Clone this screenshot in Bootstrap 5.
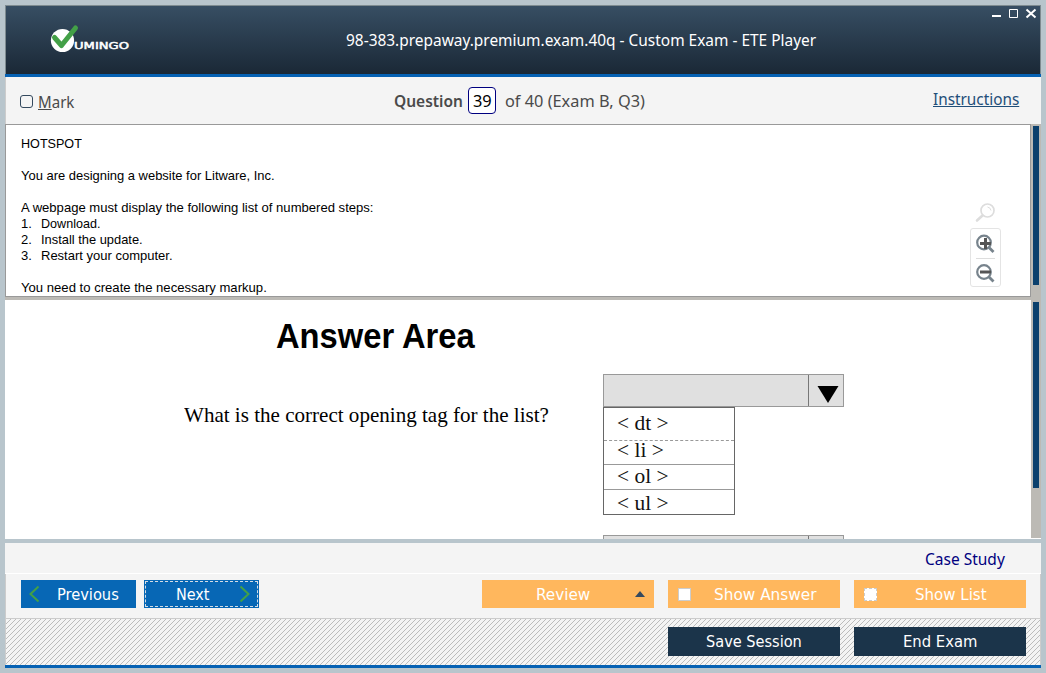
<!DOCTYPE html>
<html lang="en">
<head>
<meta charset="utf-8">
<meta name="viewport" content="width=device-width, initial-scale=1">
<title>ETE Player</title>
<link href="https://cdn.jsdelivr.net/npm/bootstrap@5.3.0/dist/css/bootstrap.min.css" rel="stylesheet">
<style>
body{background:#b8c5cc;width:1046px;height:673px;overflow:hidden;padding:5px 5px 5px;font-family:"Noto Sans","Open Sans",sans-serif;font-size:15.5px;line-height:20px;color:#4a4a4a}
.app{width:1036px;height:663px}
svg{display:block;flex:none}
.t{white-space:nowrap;display:inline-block;transform-origin:0 50%}
.titlebar{height:69px;border:1px solid #7e8b90;border-bottom:0;background:linear-gradient(#374e63,#1a2836)}
.rule{height:3px;background:#0561b3}
.tools{height:47px;background:#f4f4f4;border-left:1px solid #ccc}
.qnum{width:28px;height:27px;border:1px solid #000080;border-radius:4px;background:#fff;color:#000}
.chk{width:13px;height:13px;border:1px solid #34495e;border-radius:3px}
.tools a{color:#1f4e79}
.question{height:173px;border:1px solid #999;width:1026px;background:#fff;color:#000;font:13px/16px "Liberation Sans",Arial,sans-serif;padding:11px 15px 0}
.rail{width:10px;background:#bcbab5}
.thumb{width:6px;background:#0b406d;margin-left:2px}
.split{height:3px;background:#bcbab5}
.answer{height:239px;background:#fff;overflow:hidden;color:#000}
.zoombox{width:31px;height:59px;border:1px solid #e4e4e4;border-radius:3px}
.serif{font-family:"Liberation Serif","Times New Roman",serif;font-size:21px;line-height:24px}
.combo{width:241px;height:33px;background:#e0e0e0;border:1px solid #999}
.arrowcell{width:35px;border-left:1px solid #777}
.opts{width:132px;border:1px solid #666;color:#111}
.opts div{padding-left:13px;border-bottom:1px solid #999}
.case{height:30px;background:#f4f4f4}
.nav1{height:45px;background:#f4f4f4;border:1px solid #ccc;border-top:0}
.nav2{height:46px;border-left:1px solid #ccc;border-right:1px solid #ccc;background:#f4f4f4 url("data:image/svg+xml,%3Csvg xmlns='http://www.w3.org/2000/svg' width='5' height='5' shape-rendering='crispEdges' fill='%23bcbcbc'%3E%3Cpath d='M4 0h1v1h-1zM3 1h1v1h-1zM2 2h1v1h-1zM1 3h1v1h-1zM0 4h1v1h-1z'/%3E%3C/svg%3E")}
.bt{height:28px;border:0;border-radius:0;padding:0;font:16px/28px "DejaVu Sans Condensed","DejaVu Sans",sans-serif;color:#fff}
.blue{background:#0767b5;width:115px}
.gold{background:#ffb75d;width:172px}
.navy{background:#1b344a;width:172px;height:29px}
.box{width:13px;height:13px;background:#fff;border:1px solid #ccc}
</style>
</head>
<body>
<div class="app d-flex flex-column">
 <header class="titlebar d-flex text-white flex-shrink-0">
  <svg width="84" height="32" viewBox="0 0 84 32" style="margin:18px 0 0 44px">
   <circle cx="12.5" cy="16.500" r="11.6" fill="#fff"/>
   <path d="M4.500 13.500l7 8L25.500 4" fill="none" stroke="#43a047" stroke-width="5" stroke-linecap="round" stroke-linejoin="round"/>
   <text x="24" y="25" textLength="55" lengthAdjust="spacingAndGlyphs" font-family="DejaVu Sans" font-size="9.500" fill="#fff" stroke="#fff" stroke-width=".5">UMINGO</text>
  </svg>
  <div style="margin:24px 0 0 212px;width:470px"><span class="t" data-w="470">98-383.prepaway.premium.exam.40q - Custom Exam - ETE Player</span></div>
  <svg class="ms-auto" width="48" height="14" viewBox="0 0 48 14" style="margin:2px 3px 0 0" fill="none" stroke="#fff"><path d="M3 8h9" stroke-width="2"/><path d="M20.500 1.500h8v8h-8z"/><path d="M37.500 1.500l9 8M46.500 1.500l-9 8" stroke-width="2"/></svg>
 </header>
 <div class="rule flex-shrink-0"></div>
 <div class="tools d-flex flex-shrink-0">
  <div class="chk" style="margin:18px 5px 0 14px"></div>
  <div style="margin-top:15px;width:356px"><span class="t" data-w="36"><u>M</u>ark</span></div>
  <div style="margin-top:14px;width:74px"><span class="t fw-semibold" data-w="69">Question</span></div>
  <div class="qnum d-flex justify-content-center" style="margin-top:10px;padding-top:3px"><span class="t" data-w="19">39</span></div>
  <div style="margin:14px 0 0 9px;width:140px"><span class="t" data-w="140">of 40 (Exam B, Q3)</span></div>
  <div class="ms-auto" style="margin-top:12px;width:108px"><a href="#" class="t" data-w="86">Instructions</a></div>
 </div>
 <main class="flex-shrink-0">
  <section class="d-flex">
   <div class="question d-flex">
    <div><span class="t" data-w="61">HOTSPOT</span><br><br><span class="t" data-w="254">You are designing a website for Litware, Inc.</span><br><br><span class="t" data-w="352">A webpage must display the following list of numbered steps:</span>
     <div class="d-flex"><span style="width:20px">1.</span><span class="t" data-w="59">Download.</span></div>
     <div class="d-flex"><span style="width:20px">2.</span><span class="t" data-w="102">Install the update.</span></div>
     <div class="d-flex"><span style="width:20px">3.</span><span class="t" data-w="132">Restart your computer.</span></div>
     <br><span class="t" data-w="246">You need to create the necessary markup.</span></div>
    <div class="ms-auto" style="margin:67px 14px 0 0">
     <svg class="mx-auto" width="21" height="21" fill="none" stroke="#ddd"><circle cx="12.500" cy="7.500" r="6.500" stroke-width="1.700"/><path d="M12.500 4q3 .5 3.500 3.500"/><path d="M7.500 12.500L2 17.500" stroke-width="2.600" stroke-linecap="round"/></svg>
     <div class="zoombox mt-1 d-flex flex-column align-items-center">
      <svg width="20" height="29" viewBox="0 0 20 29" fill="none"><circle cx="8" cy="13.500" r="6.800" stroke="#77838c" stroke-width="2.200"/><path d="M13 18.500l4.500 4.500" stroke="#77838c" stroke-width="2.800"/><path d="M4 14.500h11M9.500 9v11" stroke="#555" stroke-width="3"/></svg>
      <div style="width:19px;height:1px;background:#ddd"></div>
      <svg width="20" height="27" viewBox="0 0 20 27" fill="none"><circle cx="8" cy="13" r="6.800" stroke="#77838c" stroke-width="2.200"/><path d="M13 18l4.500 4.500" stroke="#77838c" stroke-width="2.800"/><path d="M4 13h11" stroke="#555" stroke-width="3"/></svg>
     </div>
    </div>
   </div>
   <div class="rail"><div class="thumb" style="height:159px;margin-top:2px"></div></div>
  </section>
  <div class="split"></div>
  <section class="answer d-flex">
   <div style="margin-left:179px;width:419px">
    <div style="margin:16px 0 0 92px;font:bold 35px/40px 'Liberation Sans',Arial,sans-serif"><span class="t" data-w="199">Answer Area</span></div>
    <div class="serif" style="margin-top:47px"><span class="t" data-w="365">What is the correct opening tag for the list?</span></div>
   </div>
   <div style="width:428px;padding-top:74px">
    <div class="combo d-flex"><div class="arrowcell ms-auto"><svg width="34" height="31"><path d="M8.500 11h21L19 28z" fill="#000"/></svg></div></div>
    <div class="opts serif"><div style="height:33px;line-height:30px;border-bottom-style:dashed"><span class="t" data-w="52">&lt; dt &gt;</span></div><div style="height:24px;line-height:18px"><span class="t" data-w="47">&lt; li &gt;</span></div><div style="height:25px;line-height:22px"><span class="t" data-w="52">&lt; ol &gt;</span></div><div style="height:24px;line-height:26px;border:0"><span class="t" data-w="52">&lt; ul &gt;</span></div></div>
    <div class="combo d-flex" style="margin-top:20px"><div class="arrowcell ms-auto"></div></div>
   </div>
   <div class="rail" style="height:238px"><div class="thumb" style="height:186px;margin-top:2px"></div></div>
  </section>
 </main>
 <div class="flex-shrink-0" style="height:4px"></div>
 <div class="case flex-shrink-0"><div style="padding:6px 0 0 920px;color:#000080"><span class="t" data-w="80">Case Study</span></div></div>
 <div class="flex-shrink-0 bg-white" style="height:1px"></div>
 <div class="nav1 d-flex flex-shrink-0" style="padding:6px 14px 0 15px">
  <button class="bt blue d-flex align-items-center" style="margin-right:8px"><svg width="36" height="28" fill="none" stroke="#43a047" stroke-width="2"><path d="M17.500 6.500l-8 7.500 8 7.500"/></svg><span class="t" data-w="62" style="margin-top:2px">Previous</span></button>
  <button class="bt blue d-flex align-items-center" style="outline:1px dashed #d5dde5;outline-offset:-2px;padding-left:32px"><span class="t" data-w="34" style="margin-top:2px">Next</span><svg class="ms-auto" width="28" height="28" fill="none" stroke="#43a047" stroke-width="2"><path d="M9.500 6.500l8 7.500-8 7.500"/></svg></button>
  <button class="bt gold ms-auto d-flex align-items-center" style="padding-left:54px"><span class="t" data-w="54" style="margin-top:2px">Review</span><svg class="ms-auto" width="19" height="6"><path d="M0 6h10L5 0z" fill="#34495e"/></svg></button>
  <button class="bt gold d-flex align-items-center" style="margin-left:14px;padding-left:10px"><span class="box"></span><span class="t" data-w="102" style="margin:2px 0 0 23px">Show Answer</span></button>
  <button class="bt gold d-flex align-items-center" style="margin-left:14px;padding-left:10px"><span class="box" style="border-style:dashed"></span><span class="t" data-w="72" style="margin:2px 0 0 38px">Show List</span></button>
 </div>
 <div class="nav2 d-flex justify-content-end flex-shrink-0" style="padding:8px 14px 0 0">
  <button class="bt navy text-start" style="margin-right:14px;padding-left:38px"><span class="t" data-w="96">Save Session</span></button>
  <button class="bt navy text-start" style="padding-left:49px"><span class="t" data-w="74">End Exam</span></button>
 </div>
 <div class="rule flex-shrink-0"></div>
</div>
<script src="https://cdn.jsdelivr.net/npm/bootstrap@5.3.0/dist/js/bootstrap.bundle.min.js"></script>
<script>
document.querySelectorAll('[data-w]').forEach(function(e){
  var w=e.offsetWidth;
  e.style.transform='scaleX('+(e.dataset.w/w)+')';
  e.style.marginRight=(e.dataset.w-w)+'px';
});
</script>
</body>
</html>
